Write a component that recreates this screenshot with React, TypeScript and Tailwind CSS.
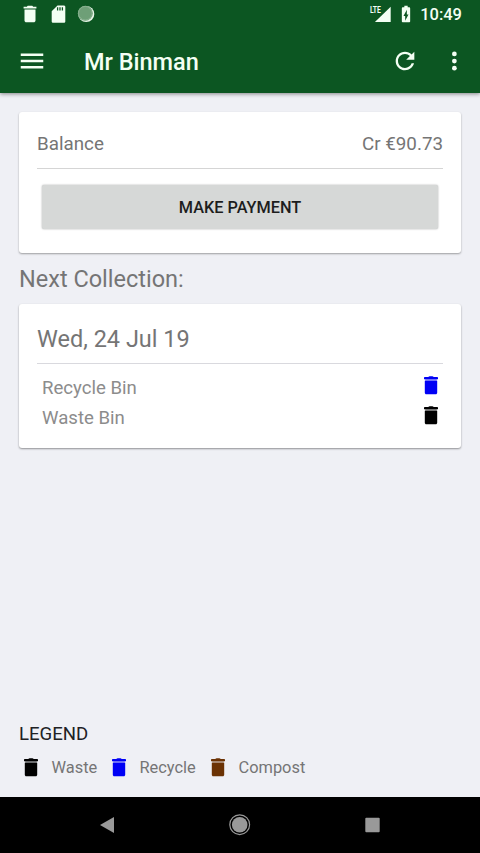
import React from "react";

type IconProps = { className?: string };

const legend = [
  { label: "Waste", color: "text-black", width: "w-[88px]" },
  { label: "Recycle", color: "text-[#0000f5]", width: "w-[99px]" },
  { label: "Compost", color: "text-[#6b3204]", width: "w-[100px]" },
];

const collections = [
  { name: "Recycle Bin", color: "text-[#0000f5]" },
  { name: "Waste Bin", color: "text-black" },
];

const StatusBinIcon = ({ className }: IconProps) => (
  <svg viewBox="0 0 24 24" fill="currentColor" className={className}>
    <path d="M6 19c0 1.1.9 2 2 2h8c1.1 0 2-.9 2-2V7H6v12zM19 4h-3.500l-1-1h-5l-1 1H5v2h14V4z" />
  </svg>
);

const BinIcon = ({ className }: IconProps) => (
  <svg viewBox="0 0 24 24" fill="currentColor" className={className}>
    <path d="M5.800 7.700h12.400v12c0 .9-.6 1.500-1.500 1.500H7.300c-.9 0-1.500-.6-1.500-1.500zM9.300 3.900c.4-.5.8-.7 1.400-.7h2.600c.6 0 1 .2 1.400.7H18c.6 0 1 .4 1 1v1.300H5V4.900c0-.6.4-1 1-1z" />
    <path d="M6.200 6h11.600v2H6.200z" opacity=".4" />
  </svg>
);

const StatusBar = () => (
  <div className="flex h-7 items-center justify-between pl-[19px] pr-[18px] text-[#f4fff4]">
    <div className="flex items-center gap-[7px]">
      <StatusBinIcon className="size-[22px]" />
      <svg viewBox="0 0 22 22" className="size-[22px]">
        <path fill="currentColor" d="M9.500 2.500h6.300c.8 0 1.500.6 1.500 1.400v14.500c0 .8-.7 1.400-1.500 1.400H5.200c-.8 0-1.500-.6-1.500-1.400V8.200z" />
        <path stroke="#0c5622" strokeWidth="1.300" d="M9.600 4.300v3.200M12 4.300v3.200M14.400 4.300v3.200" />
      </svg>
      <svg viewBox="0 0 20 20" className="-ml-px size-5">
        <circle cx="10.200" cy="10" r="8.100" fill="#e8f5e8" />
        <circle cx="9.300" cy="9.200" r="7.500" fill="#6e9f77" />
        <circle cx="9.300" cy="9.200" r="6.800" fill="none" stroke="#8fb596" strokeWidth=".8" />
      </svg>
    </div>
    <div className="flex items-center">
      <svg viewBox="0 0 22 20" className="h-5 w-[22px]" fill="currentColor">
        <path d="M21.700 2.800v15.200H5.900z" />
        <path fill="#0c5622" d="M0 0h12.200v9.800H0z" />
        <text x="0.900" y="9" fontSize="9" fontWeight="700" textLength="11" lengthAdjust="spacingAndGlyphs">
          LTE
        </text>
      </svg>
      <svg viewBox="0 0 24 24" fill="currentColor" className="ml-[5px] size-5">
        <path d="M15.670 4H14V2h-4v2H8.330C7.600 4 7 4.600 7 5.330v15.330C7 21.400 7.600 22 8.330 22h7.330c.74 0 1.340-.6 1.340-1.330V5.330C17 4.600 16.400 4 15.670 4zM11 20v-5.500H9L13 7v5.500h2L11 20z" />
      </svg>
      <span className="ml-1 pt-[2px] text-[16.5px] leading-5 font-medium">10:49</span>
    </div>
  </div>
);

const Header = () => (
  <header className="h-[93px] shrink-0 bg-[#0c5622] text-[#f4fff4] shadow-[0_1px_4px_rgba(0,0,0,0.45)]">
    <StatusBar />
    <div className="flex h-[65px] items-center pl-[17px] pr-[11px]">
      <svg viewBox="0 0 24 24" fill="currentColor" className="size-[30px]">
        <path d="M3 18h18v-2H3v2zm0-5h18v-2H3v2zm0-7v2h18V6H3z" />
      </svg>
      <h1 className="ml-[37px] flex-1 pt-[4px] text-[23.5px] font-medium">Mr Binman</h1>
      <svg viewBox="0 0 24 24" fill="currentColor" className="size-7">
        <path d="M17.650 6.350C16.200 4.900 14.210 4 12 4c-4.420 0-7.990 3.580-7.990 8s3.570 8 7.990 8c3.730 0 6.840-2.550 7.730-6h-2.080c-.82 2.330-3.040 4-5.650 4-3.310 0-6-2.690-6-6s2.690-6 6-6c1.660 0 3.140.69 4.220 1.780L13 11h7V4l-2.350 2.350z" />
      </svg>
      <svg viewBox="0 0 24 24" fill="currentColor" className="ml-[20px] size-[30px]">
        <circle cx="12.300" cy="6.300" r="1.900" />
        <circle cx="12.300" cy="12" r="1.900" />
        <circle cx="12.300" cy="17.700" r="1.900" />
      </svg>
    </div>
  </header>
);

const NavigationBar = () => (
  <nav className="flex h-14 shrink-0 items-center justify-between bg-black px-[95px] text-[#999999]">
    <svg viewBox="0 0 24 24" fill="currentColor" className="size-6">
      <path d="M5 12l14-8v16z" />
    </svg>
    <svg viewBox="0 0 24 24" fill="currentColor" className="size-6">
      <circle cx="11.700" cy="11.700" r="7.800" />
      <circle cx="11.700" cy="11.700" r="9.900" fill="none" stroke="currentColor" strokeWidth="1.200" />
    </svg>
    <svg viewBox="0 0 24 24" fill="currentColor" className="size-6">
      <rect x="4.300" y="4.800" width="14.400" height="14.400" rx="1" />
    </svg>
  </nav>
);

const App = () => {
  return (
    <div className="flex h-[853px] w-[480px] flex-col overflow-hidden bg-[#eff0f5] font-['Roboto',sans-serif] text-[#757575]">
      <Header />
      <main className="flex flex-1 flex-col px-[19px] pt-[19px]">
        <section className="h-[141px] rounded-[3px] bg-white px-[18px] shadow-[0_1px_2px_rgba(0,0,0,0.35)]">
          <div className="flex h-[57px] items-center justify-between border-b border-[#d5d5d5] pt-[9px] text-[18.8px]">
            <span>Balance</span>
            <span>Cr €90.73</span>
          </div>
          <button className="ml-[5px] mt-4 h-11 w-[396px] rounded-[2px] bg-[#d6d8d7] pt-[3px] text-[16.3px] font-medium text-[#1d1d1d] shadow-[0_0_2px_rgba(0,0,0,0.35)]">
            MAKE PAYMENT
          </button>
        </section>
        <h2 className="mt-[10px] text-[23.5px] leading-[32px]">Next Collection:</h2>
        <section className="mt-[9px] h-[144px] rounded-[3px] bg-white px-[18px] shadow-[0_1px_2px_rgba(0,0,0,0.4)]">
          <div className="flex h-[60px] items-center border-b border-[#d9d9de] pt-[12px] text-[23.5px]">
            Wed, 24 Jul 19
          </div>
          <ul className="pt-[9px] pl-[5px] text-[18.6px] text-[#8c8c8c]">
            {collections.map((item) => (
              <li key={item.name} className="flex h-[30px] items-start justify-between">
                <span className="leading-[31px]">{item.name}</span>
                <BinIcon className={`size-6 ${item.color}`} />
              </li>
            ))}
          </ul>
        </section>
        <footer className="mt-auto h-[77px]">
          <h3 className="text-[18.6px] leading-7 text-[#202124]">LEGEND</h3>
          <ul className="-ml-[0.5px] flex pt-[6px] text-[16.4px]">
            {legend.map((item) => (
              <li key={item.label} className={`flex items-center ${item.width}`}>
                <BinIcon className={`size-6 shrink-0 ${item.color}`} />
                <span className="ml-[9px] pt-[2px] leading-6">{item.label}</span>
              </li>
            ))}
          </ul>
        </footer>
      </main>
      <NavigationBar />
    </div>
  );
};

export default App;
